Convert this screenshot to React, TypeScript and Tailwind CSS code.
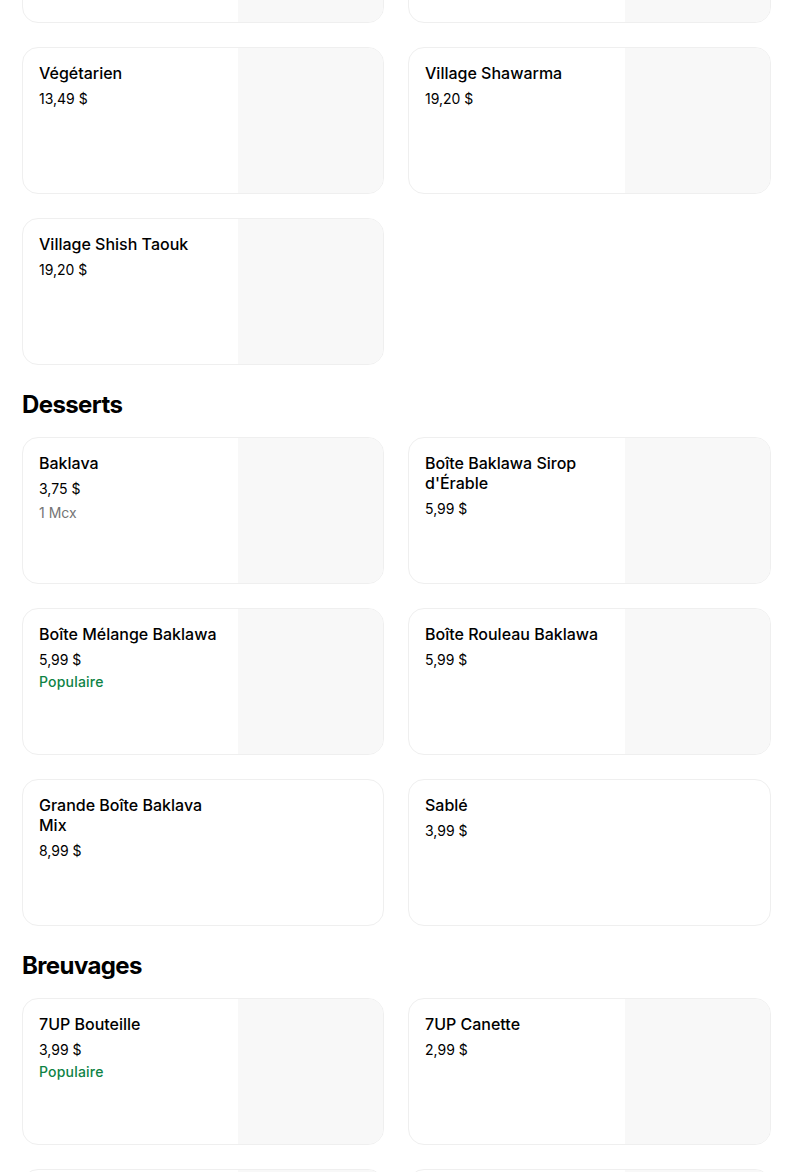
import React from "react";

type Item = { name: string; price: string; sub?: string; popular?: boolean; image?: boolean };

const Card = ({ item }: { item: Item }) => (
  <div className="flex h-[147px] overflow-hidden rounded-2xl border border-[#efefef] bg-white">
    <div className="flex-1 min-w-0 pl-4 pr-4 pt-[15px]">
      <div className="text-[16px] leading-[20px] font-medium text-black max-w-[184px]">{item.name}</div>
      <div className="mt-[6px] text-[14px] leading-[20px] text-black">{item.price}</div>
      {item.sub && <div className="mt-1 text-[14px] leading-[20px] text-[#757575]">{item.sub}</div>}
      {item.popular && (
        <div className="mt-0.5 text-[14px] leading-[20px] font-medium text-[#0e8345] tracking-[0.2px]">Populaire</div>
      )}
    </div>
    {item.image !== false && <div className="w-[145px] h-full shrink-0 bg-[#f8f8f8]" />}
  </div>
);

const Grid = ({ items }: { items: Item[] }) => (
  <div className="grid grid-cols-[362px_363px] gap-6">
    {items.map((it, i) => (
      <Card key={i} item={it} />
    ))}
  </div>
);

const Heading = ({ children }: { children: React.ReactNode }) => (
  <h2 className="mt-6 mb-4 text-[24px] leading-[32px] font-bold tracking-[-0.6px] text-black">{children}</h2>
);

export default function App() {
  return (
    <div className="bg-white min-h-[1172px] overflow-hidden" style={{ fontFamily: "Inter, 'Noto Sans', sans-serif" }}>
      <div className="pl-[22px] pr-[33px] mt-[-124px]">
        <Grid
          items={[
            { name: "", price: "" },
            { name: "", price: "" },
            { name: "Végétarien", price: "13,49 $" },
            { name: "Village Shawarma", price: "19,20 $" },
            { name: "Village Shish Taouk", price: "19,20 $" },
          ]}
        />
        <Heading>Desserts</Heading>
        <Grid
          items={[
            { name: "Baklava", price: "3,75 $", sub: "1 Mcx" },
            { name: "Boîte Baklawa Sirop d'Érable", price: "5,99 $" },
            { name: "Boîte Mélange Baklawa", price: "5,99 $", popular: true },
            { name: "Boîte Rouleau Baklawa", price: "5,99 $" },
            { name: "Grande Boîte Baklava Mix", price: "8,99 $", image: false },
            { name: "Sablé", price: "3,99 $", image: false },
          ]}
        />
        <Heading>Breuvages</Heading>
        <Grid
          items={[
            { name: "7UP Bouteille", price: "3,99 $", popular: true },
            { name: "7UP Canette", price: "2,99 $" },
            { name: "", price: "" },
            { name: "", price: "" },
          ]}
        />
      </div>
    </div>
  );
}
